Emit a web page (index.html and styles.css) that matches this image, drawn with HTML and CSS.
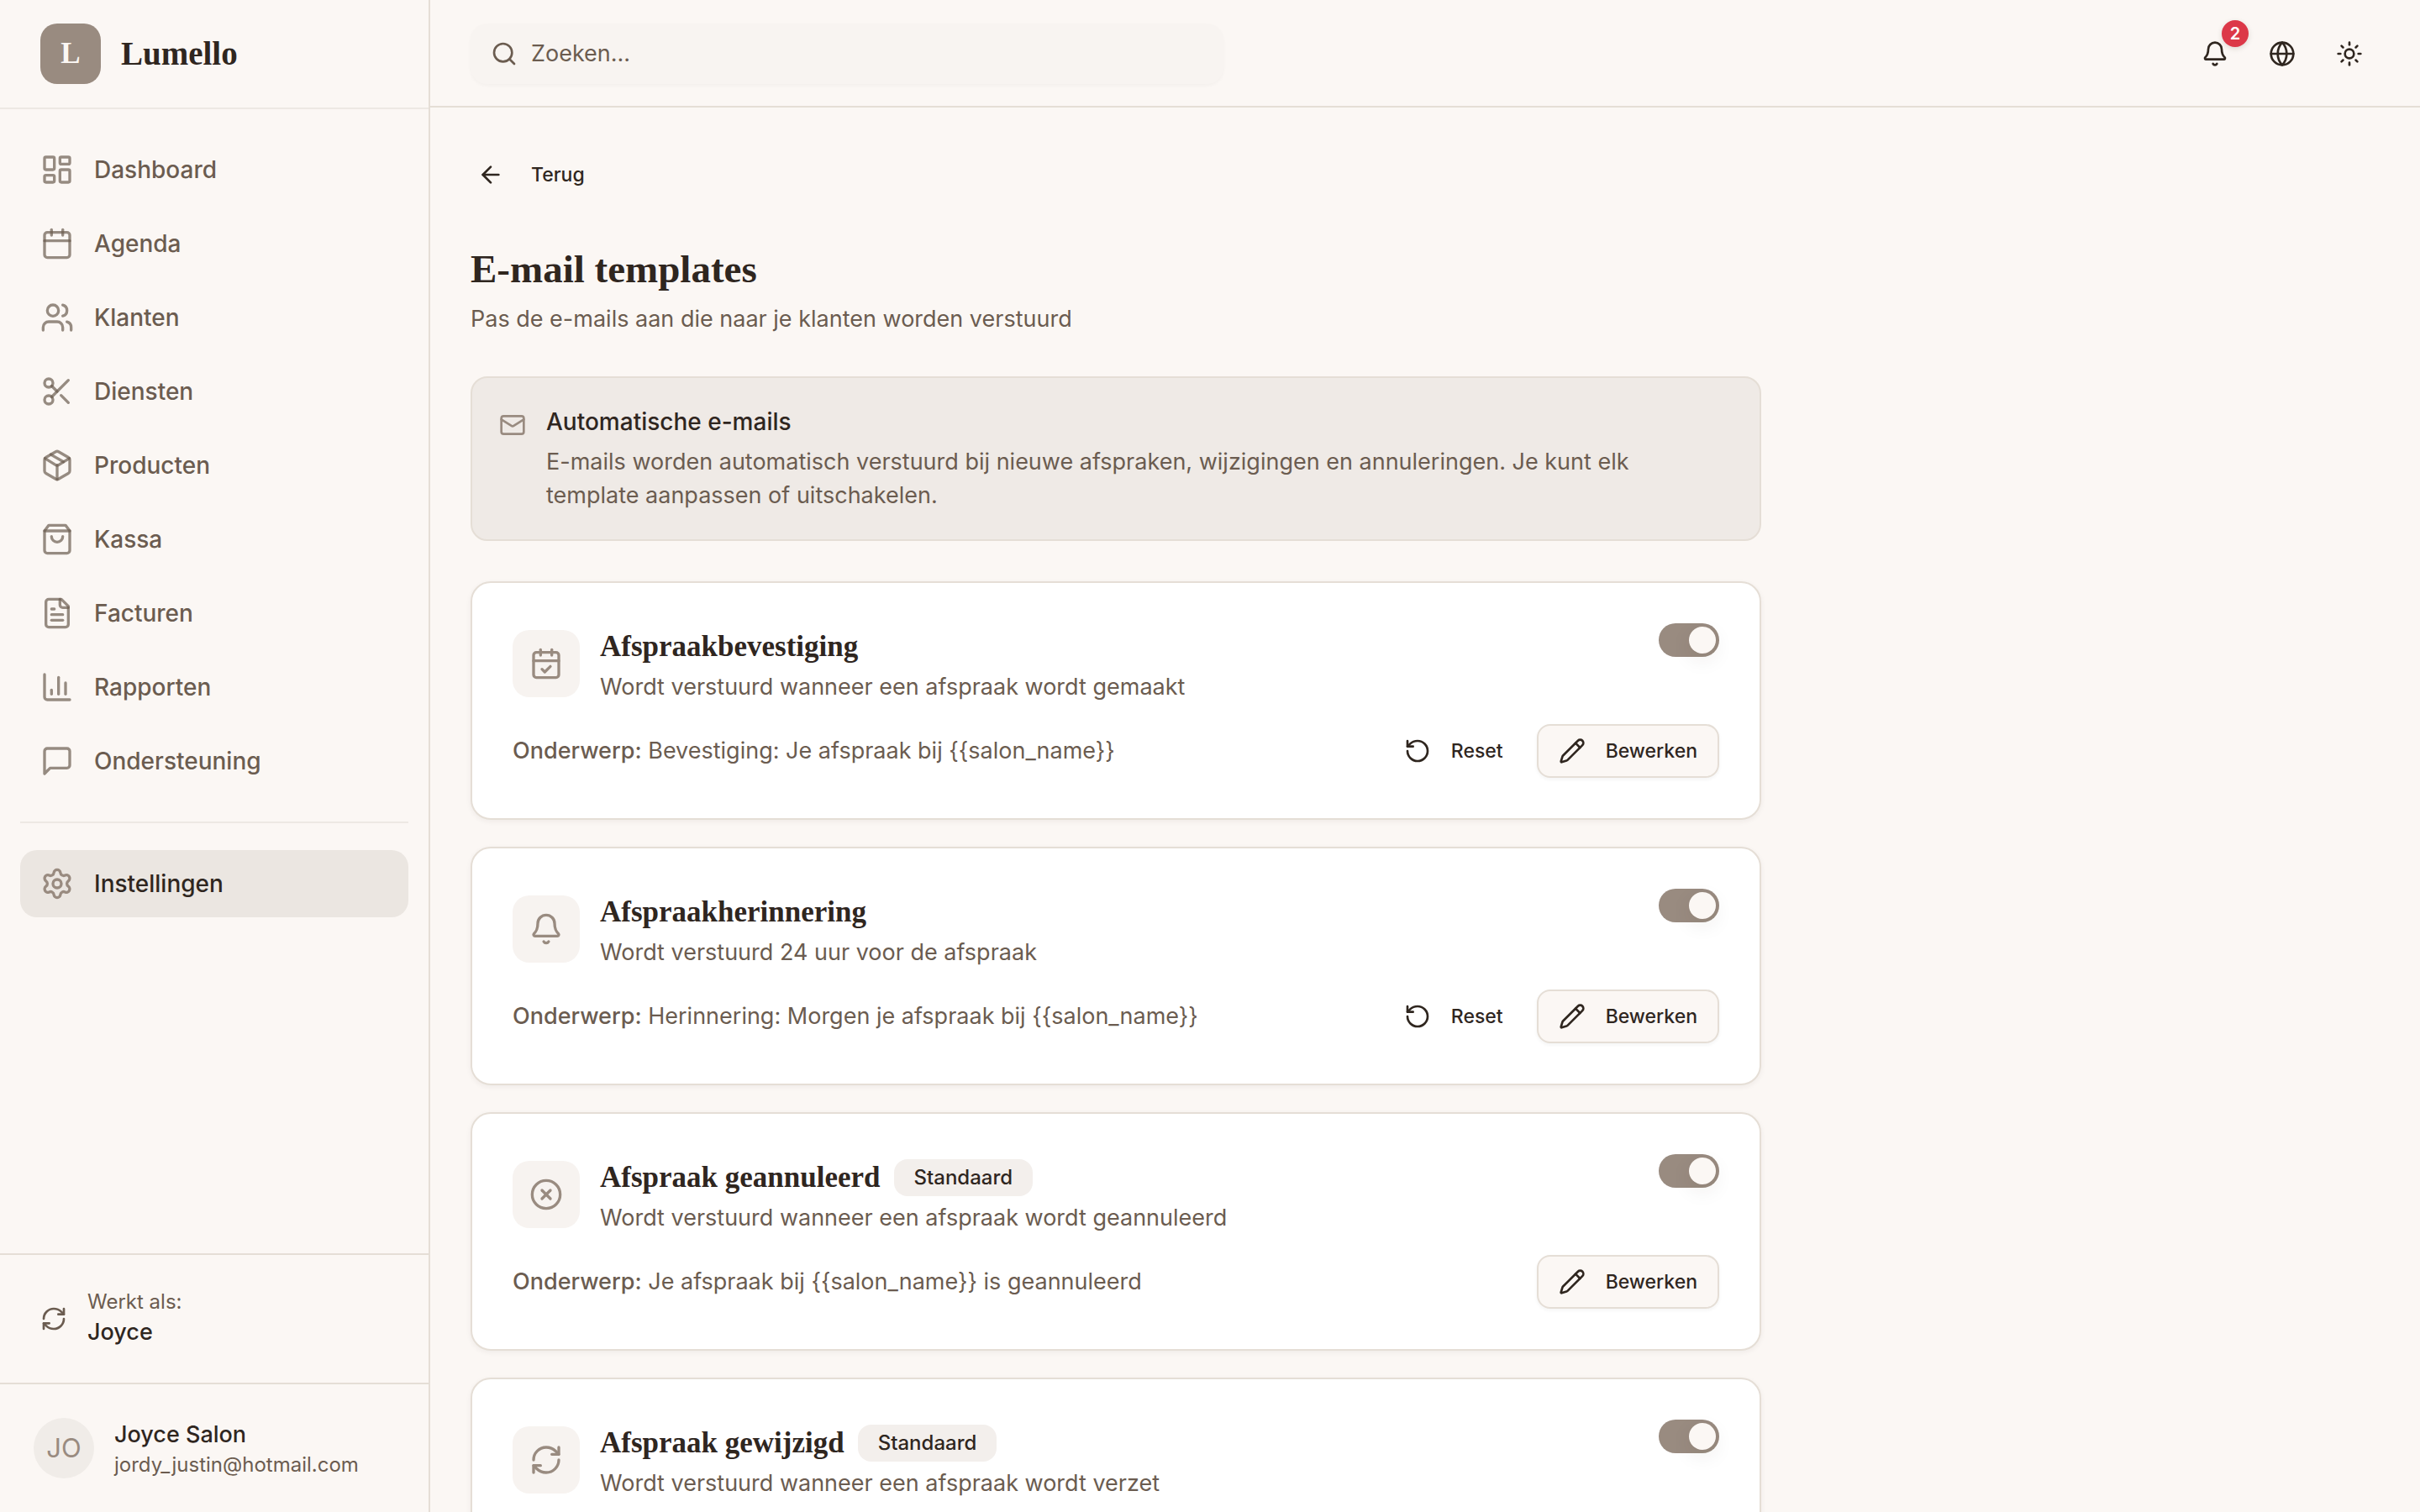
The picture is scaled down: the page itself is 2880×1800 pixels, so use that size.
FILE: index.html
```
<!DOCTYPE html>
<html lang="nl">
<head>
  <meta charset="UTF-8" />
  <meta name="viewport" content="width=device-width,initial-scale=1" />
  <title>Lumello - E-mail templates</title>
  <link rel="stylesheet" href="styles.css">
</head>
<body>
  <!-- icon sprite -->
  <svg class="sprite" aria-hidden="true">
    <symbol id="i-dashboard" viewBox="0 0 24 24"><rect width="7" height="9" x="3" y="3" rx="1"/><rect width="7" height="5" x="14" y="3" rx="1"/><rect width="7" height="9" x="14" y="12" rx="1"/><rect width="7" height="5" x="3" y="16" rx="1"/></symbol>
    <symbol id="i-calendar" viewBox="0 0 24 24"><path d="M8 2v4"/><path d="M16 2v4"/><rect width="18" height="18" x="3" y="4" rx="2"/><path d="M3 10h18"/></symbol>
    <symbol id="i-calendar-check" viewBox="0 0 24 24"><path d="M8 2v4"/><path d="M16 2v4"/><rect width="18" height="18" x="3" y="4" rx="2"/><path d="M3 10h18"/><path d="m9 16 2 2 4-4"/></symbol>
    <symbol id="i-users" viewBox="0 0 24 24"><path d="M16 21v-2a4 4 0 0 0-4-4H6a4 4 0 0 0-4 4v2"/><circle cx="9" cy="7" r="4"/><path d="M22 21v-2a4 4 0 0 0-3-3.87"/><path d="M16 3.13a4 4 0 0 1 0 7.75"/></symbol>
    <symbol id="i-scissors" viewBox="0 0 24 24"><circle cx="6" cy="6" r="3"/><path d="M8.12 8.12 12 12"/><path d="M20 4 8.12 15.88"/><circle cx="6" cy="18" r="3"/><path d="M14.8 14.8 20 20"/></symbol>
    <symbol id="i-package" viewBox="0 0 24 24"><path d="M11 21.73a2 2 0 0 0 2 0l7-4A2 2 0 0 0 21 16V8a2 2 0 0 0-1-1.73l-7-4a2 2 0 0 0-2 0l-7 4A2 2 0 0 0 3 8v8a2 2 0 0 0 1 1.73z"/><path d="M12 22V12"/><path d="m3.3 7 7.703 4.734a2 2 0 0 0 1.994 0L20.7 7"/><path d="m7.5 4.27 9 5.15"/></symbol>
    <symbol id="i-bag" viewBox="0 0 24 24"><path d="M6 2 3 6v14a2 2 0 0 0 2 2h14a2 2 0 0 0 2-2V6l-3-4Z"/><path d="M3 6h18"/><path d="M16 10a4 4 0 0 1-8 0"/></symbol>
    <symbol id="i-file" viewBox="0 0 24 24"><path d="M15 2H6a2 2 0 0 0-2 2v16a2 2 0 0 0 2 2h12a2 2 0 0 0 2-2V7Z"/><path d="M14 2v4a2 2 0 0 0 2 2h4"/><path d="M10 9H8"/><path d="M16 13H8"/><path d="M16 17H8"/></symbol>
    <symbol id="i-chart" viewBox="0 0 24 24"><path d="M3 3v16a2 2 0 0 0 2 2h16"/><path d="M18 17V9"/><path d="M13 17V5"/><path d="M8 17v-3"/></symbol>
    <symbol id="i-message" viewBox="0 0 24 24"><path d="M21 15a2 2 0 0 1-2 2H7l-4 4V5a2 2 0 0 1 2-2h14a2 2 0 0 1 2 2z"/></symbol>
    <symbol id="i-settings" viewBox="0 0 24 24"><path d="M9.671 4.136a2.34 2.34 0 0 1 4.659 0 2.34 2.34 0 0 0 3.319 1.915 2.34 2.34 0 0 1 2.33 4.033 2.34 2.34 0 0 0 0 3.831 2.34 2.34 0 0 1-2.33 4.033 2.34 2.34 0 0 0-3.319 1.915 2.34 2.34 0 0 1-4.659 0 2.34 2.34 0 0 0-3.32-1.915 2.34 2.34 0 0 1-2.33-4.033 2.34 2.34 0 0 0 0-3.831A2.34 2.34 0 0 1 6.35 6.051a2.34 2.34 0 0 0 3.319-1.915"/><circle cx="12" cy="12" r="3"/></symbol>
    <symbol id="i-refresh" viewBox="0 0 24 24"><path d="M3 12a9 9 0 0 1 9-9 9.75 9.75 0 0 1 6.74 2.74L21 8"/><path d="M21 3v5h-5"/><path d="M21 12a9 9 0 0 1-9 9 9.75 9.75 0 0 1-6.74-2.74L3 16"/><path d="M8 16H3v5"/></symbol>
    <symbol id="i-search" viewBox="0 0 24 24"><circle cx="11" cy="11" r="8"/><path d="m21 21-4.3-4.3"/></symbol>
    <symbol id="i-bell" viewBox="0 0 24 24"><path d="M10.268 21a2 2 0 0 0 3.464 0"/><path d="M3.262 15.326A1 1 0 0 0 4 17h16a1 1 0 0 0 .74-1.673C19.41 13.956 18 12.499 18 8A6 6 0 0 0 6 8c0 4.499-1.411 5.956-2.738 7.326"/></symbol>
    <symbol id="i-globe" viewBox="0 0 24 24"><circle cx="12" cy="12" r="10"/><path d="M12 2a14.5 14.5 0 0 0 0 20 14.5 14.5 0 0 0 0-20"/><path d="M2 12h20"/></symbol>
    <symbol id="i-sun" viewBox="0 0 24 24"><circle cx="12" cy="12" r="4"/><path d="M12 2v2"/><path d="M12 20v2"/><path d="m4.93 4.93 1.41 1.41"/><path d="m17.66 17.66 1.41 1.41"/><path d="M2 12h2"/><path d="M20 12h2"/><path d="m6.34 17.66-1.41 1.41"/><path d="m19.07 4.93-1.41 1.41"/></symbol>
    <symbol id="i-back" viewBox="0 0 24 24"><path d="m12 19-7-7 7-7"/><path d="M19 12H5"/></symbol>
    <symbol id="i-mail" viewBox="0 0 24 24"><rect width="20" height="16" x="2" y="4" rx="2"/><path d="m22 7-8.97 5.7a1.94 1.94 0 0 1-2.06 0L2 7"/></symbol>
    <symbol id="i-reset" viewBox="0 0 24 24"><path d="M3 12a9 9 0 1 0 9-9 9.75 9.75 0 0 0-6.74 2.74L3 8"/><path d="M3 3v5h5"/></symbol>
    <symbol id="i-pencil" viewBox="0 0 24 24"><path d="M21.174 6.812a1 1 0 0 0-3.986-3.987L3.842 16.174a2 2 0 0 0-.5.83l-1.321 4.352a.5.5 0 0 0 .623.622l4.353-1.32a2 2 0 0 0 .83-.497z"/><path d="m15 5 4 4"/></symbol>
    <symbol id="i-cancel" viewBox="0 0 24 24"><circle cx="12" cy="12" r="10"/><path d="m15 9-6 6"/><path d="m9 9 6 6"/></symbol>
  </svg>

  <div class="app">
    <aside class="sidebar">
      <div class="brand">
        <span class="brand-mark">L</span>
        <span class="brand-name">Lumello</span>
      </div>

      <nav class="nav">
        <a class="nav-item" href="#"><svg class="icon icon-lg"><use href="#i-dashboard"/></svg>Dashboard</a>
        <a class="nav-item" href="#"><svg class="icon icon-lg"><use href="#i-calendar"/></svg>Agenda</a>
        <a class="nav-item" href="#"><svg class="icon icon-lg"><use href="#i-users"/></svg>Klanten</a>
        <a class="nav-item" href="#"><svg class="icon icon-lg"><use href="#i-scissors"/></svg>Diensten</a>
        <a class="nav-item" href="#"><svg class="icon icon-lg"><use href="#i-package"/></svg>Producten</a>
        <a class="nav-item" href="#"><svg class="icon icon-lg"><use href="#i-bag"/></svg>Kassa</a>
        <a class="nav-item" href="#"><svg class="icon icon-lg"><use href="#i-file"/></svg>Facturen</a>
        <a class="nav-item" href="#"><svg class="icon icon-lg"><use href="#i-chart"/></svg>Rapporten</a>
        <a class="nav-item" href="#"><svg class="icon icon-lg"><use href="#i-message"/></svg>Ondersteuning</a>
        <hr class="nav-line">
        <a class="nav-item active" href="#"><svg class="icon icon-lg"><use href="#i-settings"/></svg>Instellingen</a>
      </nav>

      <div class="side-section">
        <button class="switch-user" type="button">
          <svg class="icon"><use href="#i-refresh"/></svg>
          <span class="stack">
            <span class="small">Werkt als:</span>
            <span class="name">Joyce</span>
          </span>
        </button>
      </div>
      <div class="side-section">
        <button class="account" type="button">
          <span class="avatar">JO</span>
          <span class="stack">
            <span class="name">Joyce Salon</span>
            <span class="small">jordy_justin@hotmail.com</span>
          </span>
        </button>
      </div>
    </aside>

    <div class="page">
      <header class="topbar">
        <label class="search">
          <svg class="icon"><use href="#i-search"/></svg>
          <input type="search" placeholder="Zoeken..." aria-label="Zoeken">
        </label>
        <div class="topbar-actions">
          <button class="icon-btn" type="button" aria-label="Meldingen">
            <svg class="icon"><use href="#i-bell"/></svg>
            <span class="count">2</span>
          </button>
          <button class="icon-btn" type="button" aria-label="Taal"><svg class="icon"><use href="#i-globe"/></svg></button>
          <button class="icon-btn" type="button" aria-label="Thema"><svg class="icon"><use href="#i-sun"/></svg></button>
        </div>
      </header>

      <main class="content">
        <button class="btn btn-back" type="button"><svg class="icon"><use href="#i-back"/></svg>Terug</button>

        <div class="heading">
          <h1>E-mail templates</h1>
          <p>Pas de e-mails aan die naar je klanten worden verstuurd</p>
        </div>

        <section class="notice">
          <svg class="icon"><use href="#i-mail"/></svg>
          <div>
            <h2>Automatische e-mails</h2>
            <p>E-mails worden automatisch verstuurd bij nieuwe afspraken, wijzigingen en annuleringen. Je kunt elk template aanpassen of uitschakelen.</p>
          </div>
        </section>

        <div class="cards">
          <article class="card">
            <div class="card-head">
              <span class="card-icon"><svg class="icon icon-lg"><use href="#i-calendar-check"/></svg></span>
              <div class="card-title">
                <h3 id="t-confirm">Afspraakbevestiging</h3>
                <p>Wordt verstuurd wanneer een afspraak wordt gemaakt</p>
              </div>
              <input class="toggle" type="checkbox" role="switch" aria-labelledby="t-confirm" checked>
            </div>
            <div class="card-foot">
              <p><strong>Onderwerp:</strong> Bevestiging: Je afspraak bij {{salon_name}}</p>
              <button class="btn" type="button"><svg class="icon"><use href="#i-reset"/></svg>Reset</button>
              <button class="btn btn-outline" type="button"><svg class="icon"><use href="#i-pencil"/></svg>Bewerken</button>
            </div>
          </article>

          <article class="card">
            <div class="card-head">
              <span class="card-icon"><svg class="icon icon-lg"><use href="#i-bell"/></svg></span>
              <div class="card-title">
                <h3 id="t-reminder">Afspraakherinnering</h3>
                <p>Wordt verstuurd 24 uur voor de afspraak</p>
              </div>
              <input class="toggle" type="checkbox" role="switch" aria-labelledby="t-reminder" checked>
            </div>
            <div class="card-foot">
              <p><strong>Onderwerp:</strong> Herinnering: Morgen je afspraak bij {{salon_name}}</p>
              <button class="btn" type="button"><svg class="icon"><use href="#i-reset"/></svg>Reset</button>
              <button class="btn btn-outline" type="button"><svg class="icon"><use href="#i-pencil"/></svg>Bewerken</button>
            </div>
          </article>

          <article class="card">
            <div class="card-head">
              <span class="card-icon"><svg class="icon icon-lg"><use href="#i-cancel"/></svg></span>
              <div class="card-title">
                <div class="title-row">
                  <h3 id="t-cancel">Afspraak geannuleerd</h3>
                  <span class="tag">Standaard</span>
                </div>
                <p>Wordt verstuurd wanneer een afspraak wordt geannuleerd</p>
              </div>
              <input class="toggle" type="checkbox" role="switch" aria-labelledby="t-cancel" checked>
            </div>
            <div class="card-foot">
              <p><strong>Onderwerp:</strong> Je afspraak bij {{salon_name}} is geannuleerd</p>
              <button class="btn btn-outline" type="button"><svg class="icon"><use href="#i-pencil"/></svg>Bewerken</button>
            </div>
          </article>

          <article class="card">
            <div class="card-head">
              <span class="card-icon"><svg class="icon icon-lg"><use href="#i-refresh"/></svg></span>
              <div class="card-title">
                <div class="title-row">
                  <h3 id="t-change">Afspraak gewijzigd</h3>
                  <span class="tag">Standaard</span>
                </div>
                <p>Wordt verstuurd wanneer een afspraak wordt verzet</p>
              </div>
              <input class="toggle" type="checkbox" role="switch" aria-labelledby="t-change" checked>
            </div>
            <div class="card-foot">
              <p><strong>Onderwerp:</strong> Je afspraak bij {{salon_name}} is gewijzigd</p>
              <button class="btn btn-outline" type="button"><svg class="icon"><use href="#i-pencil"/></svg>Bewerken</button>
            </div>
          </article>
        </div>
      </main>
    </div>
  </div>
</body>
</html>
```
FILE: styles.css
```
:root {
  --bg: #fbf7f4;
  --fg: #2f261f;
  --muted: #6b5c50;
  --accent: #998b80;
  --border: #e5ded6;
  --soft: #ede8e4;
  --sans: Inter, "Liberation Sans", sans-serif;
  --serif: "Liberation Serif", serif;
}
* { box-sizing:border-box; margin:0; padding:0 }
body {
  font-family:var(--sans); font-size:27px; line-height:40px;
  background:var(--bg); color:var(--fg);
}
a { color:inherit; text-decoration:none }
button, input { font:inherit; color:inherit; border:none; background:none }
button { cursor:pointer; text-align:left }
h1, h3, .brand { font-family:var(--serif); font-weight:700 }

.sprite { display:none }
.icon {
  width:32px; height:32px; flex:none;
  fill:none; stroke:currentColor; stroke-width:2;
  stroke-linecap:round; stroke-linejoin:round;
}
.icon-lg { width:40px; height:40px }

.app { display:grid; grid-template-columns:512px 1fr; height:100vh; overflow:hidden }

/* sidebar */
.sidebar { display:flex; flex-direction:column; border-right:2px solid var(--border) }
.brand {
  display:flex; align-items:center; gap:24px;
  padding:28px 48px; border-bottom:2px solid var(--soft);
}
.brand-mark {
  display:flex; align-items:center; justify-content:center;
  width:72px; height:72px; border-radius:20px;
  background:var(--accent); color:var(--bg); font-size:35px;
}
.brand-name { font-size:39px }
.nav {
  flex:1; display:flex; flex-direction:column; gap:8px;
  padding:32px 24px; color:var(--muted); font-size:28px; font-weight:500;
}
.nav-item {
  display:flex; align-items:center; gap:24px;
  height:80px; padding:0 24px; border-radius:20px;
}
.nav-item .icon { stroke:rgba(107,92,80,0.7) }
.nav-item.active { background:#ebe6e1; color:var(--fg) }
.nav-item.active .icon { stroke:var(--accent) }
.nav-line { border:none; border-top:2px solid var(--soft); margin:24px 0 }

.side-section { border-top:2px solid var(--border); padding:24px }
.switch-user, .account { display:flex; align-items:center; gap:24px; width:100%; height:104px }
.switch-user { padding:0 24px }
.switch-user .icon { color:var(--muted) }
.account { padding:0 16px }
.stack { display:flex; flex-direction:column }
.name { font-weight:500; line-height:40px }
.small { font-size:24px; line-height:32px; color:var(--muted) }
.avatar {
  display:flex; align-items:center; justify-content:center;
  width:72px; height:72px; border-radius:50%;
  background:#f0ece8; color:var(--accent); font-size:31px;
}

/* top bar */
.page { display:flex; flex-direction:column; min-width:0; min-height:0 }
.topbar {
  display:flex; align-items:center; justify-content:space-between;
  flex:none; padding:28px 48px 26px; border-bottom:2px solid var(--border);
}
.search {
  display:flex; align-items:center; gap:16px;
  width:896px; height:72px; padding:0 24px; border-radius:20px;
  background:#f8f4f1; color:var(--muted);
  box-shadow:0 2px 4px rgba(47,38,31,0.03);
}
.search input { flex:1; min-width:0; outline:none }
.search input::placeholder { color:var(--muted); opacity:1 }
.topbar-actions { display:flex; gap:8px }
.icon-btn {
  position:relative; display:flex; align-items:center; justify-content:center;
  width:72px; height:72px;
}
.count {
  position:absolute; top:-4px; right:-4px;
  width:32px; height:32px; border-radius:50%;
  background:#dc3848; color:#fff;
  font-size:20px; font-weight:600; line-height:32px; text-align:center;
  box-shadow:0 2px 6px rgba(47,38,31,0.15);
}

/* content */
.content { flex:1; min-height:0; overflow-y:auto; scrollbar-width:none; padding:48px }
.content > * { max-width:1536px }
.content p { color:var(--muted) }

.btn {
  display:flex; align-items:center; gap:24px; flex:none;
  height:64px; padding:0 24px; border-radius:16px;
  font-size:23px; font-weight:500;
}
.btn-outline {
  border:2px solid var(--border); background:var(--bg);
  box-shadow:0 2px 4px rgba(47,38,31,0.05);
}
.btn-back { gap:32px; padding:0 8px }

.heading { margin:48px 0 }
.heading h1 { font-size:47px; line-height:64px }
.heading p { margin-top:8px }

.notice {
  display:flex; gap:24px; padding:32px;
  border:2px solid var(--border); border-radius:20px; background:#efeae6;
}
.notice .icon { margin-top:8px; color:var(--accent) }
.notice h2 { font-size:28px; font-weight:500 }
.notice p { margin-top:8px; max-width:50em }

.cards { display:flex; flex-direction:column; gap:32px; margin-top:48px }
.card {
  padding:48px; border:2px solid var(--border); border-radius:24px;
  background:#fff; box-shadow:0 2px 6px rgba(47,38,31,0.06);
}
.card-head { display:flex; align-items:flex-start; gap:24px }
.card-icon {
  display:flex; align-items:center; justify-content:center; flex:none;
  width:80px; height:80px; margin-top:8px; border-radius:20px;
  background:#f7f3f0; color:var(--accent);
}
.card-title { flex:1 }
.title-row { display:flex; align-items:center; gap:16px }
.card h3 { font-size:35px; line-height:56px }
.tag {
  padding:0 24px; border-radius:16px; background:#f3efec;
  font-size:24px; font-weight:500; line-height:44px;
}

.toggle {
  appearance:none; flex:none; width:72px; height:40px; padding:4px;
  border-radius:20px; background:#d8d0c8; cursor:pointer;
}
.toggle::before {
  content:""; display:block; width:32px; height:32px; border-radius:50%;
  background:var(--bg); box-shadow:0 8px 24px rgba(47,38,31,0.08);
}
.toggle:checked { background:var(--accent) }
.toggle:checked::before { margin-left:auto }

.card-foot { display:flex; align-items:center; gap:16px; margin-top:24px }
.card-foot p { flex:1 }
.card-foot strong { font-weight:500 }
```
